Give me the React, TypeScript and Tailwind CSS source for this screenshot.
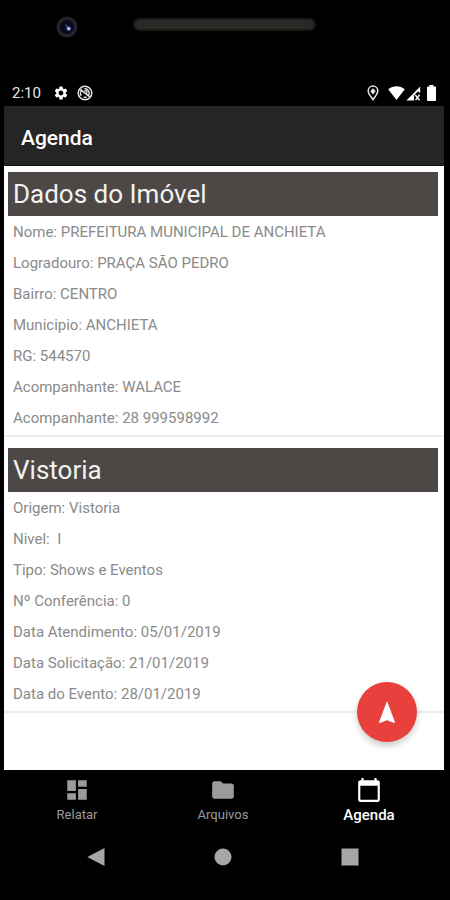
import { useState } from 'react';
import { MdCalendarToday, MdDashboard, MdFolder, MdSettings } from 'react-icons/md';
import type { IconType } from 'react-icons';

interface Field {
  label: string;
  value: string;
}

interface SectionProps {
  title: string;
  fields: Field[];
}

interface Tab {
  name: string;
  icon: IconType;
}

const PROPERTY_FIELDS: Field[] = [
  { label: 'Nome:', value: 'PREFEITURA MUNICIPAL DE ANCHIETA' },
  { label: 'Logradouro:', value: 'PRAÇA SÃO PEDRO' },
  { label: 'Bairro:', value: 'CENTRO' },
  { label: 'Municipio:', value: 'ANCHIETA' },
  { label: 'RG:', value: '544570' },
  { label: 'Acompanhante:', value: 'WALACE' },
  { label: 'Acompanhante:', value: '28 999598992' },
];

const INSPECTION_FIELDS: Field[] = [
  { label: 'Origem:', value: 'Vistoria' },
  { label: 'Nivel:', value: '\u00a0I' },
  { label: 'Tipo:', value: 'Shows e Eventos' },
  { label: 'Nº Conferência:', value: '0' },
  { label: 'Data Atendimento:', value: '05/01/2019' },
  { label: 'Data Solicitação:', value: '21/01/2019' },
  { label: 'Data do Evento:', value: '28/01/2019' },
];

const TABS: Tab[] = [
  { name: 'Relatar', icon: MdDashboard },
  { name: 'Arquivos', icon: MdFolder },
  { name: 'Agenda', icon: MdCalendarToday },
];

// Camera and speaker of the device
function PhoneTop() {
  return (
    <div className="flex h-20 items-start pt-4 pl-[52px]">
      <svg viewBox="0 0 22 22" className="size-[22px]">
        <circle cx="11" cy="11" r="10.5" fill="#24242a" />
        <circle cx="11" cy="11" r="7" fill="#090a1c" />
        <path d="M8.5 7.5l3 2 3.2 1.8-.6 3.2-3.4-.4-.4-3z" fill="#3c3f8f" />
        <circle cx="12.8" cy="12.7" r="1.7" fill="#b9bcfa" />
      </svg>
      <div className="mt-[2px] ml-[55px] h-[13px] w-[183px] rounded-full border-2 border-[#1b1a18] bg-[#2b2926]" />
    </div>
  );
}

function StatusBar() {
  return (
    <div className="flex h-[26px] items-center justify-between px-2 text-white">
      <div className="flex items-center">
        <span className="text-[15px] leading-none text-gray-200">2:10</span>
        <MdSettings className="ml-3 size-4" />
        <svg viewBox="0 0 16 16" className="ml-2 size-4" fill="none" stroke="#e5e5e5">
          <circle cx="8" cy="8" r="6.8" strokeWidth="1.5" />
          <path d="M4.4 10.8A4.3 4.3 0 0 1 5 4.9M7.4 3.8a4.3 4.3 0 0 1 4.3 6.2M9.6 12a4.3 4.3 0 0 1-3 .2" strokeWidth="1.4" />
          <path d="M3.4 4.4l9.4 7.4" strokeWidth="1.6" />
          <path d="M7.2 5.9h2.6v2.6" strokeWidth="1.3" />
        </svg>
      </div>
      <div className="flex items-center">
        <svg viewBox="0 0 12 16" className="h-4 w-3" fill="none" stroke="#e5e5e5">
          <path d="M6 14.6C4 11.6 1.2 8.6 1.2 5.9a4.8 4.8 0 0 1 9.6 0c0 2.7-2.8 5.7-4.8 8.7z" strokeWidth="1.5" />
          <path d="M6 3.2l2.7 3L6 9.4 3.3 6.2z" fill="#e5e5e5" stroke="none" />
        </svg>
        <svg viewBox="0 0 17 14" className="ml-[9px] h-[14px] w-[17px]" fill="#fff">
          <path d="M8.5 14L.2 3.2C5-.8 12-.8 16.8 3.2z" />
        </svg>
        <svg viewBox="0 0 15 15" className="ml-px size-[15px]" fill="#fff">
          <path d="M.4 14.6L14.2.6v6h-1.7V4.8L8 9.4v5.2z" />
          <path d="M9.3 9l4.2 5.2M13.6 8.6l-4 5.6" stroke="#fff" strokeWidth="1.4" />
        </svg>
        <svg viewBox="0 0 9 16" className="ml-[6px] h-4 w-[9px]" fill="#fff">
          <path d="M2.5 0h4v1.6H8.2q.8 0 .8.8v12.8q0 .8-.8.8H.8q-.8 0-.8-.8V2.4q0-.8.8-.8h1.7z" />
        </svg>
      </div>
    </div>
  );
}

function Section({ title, fields }: SectionProps) {
  return (
    <section className="border-b-2 border-[#ececec] pb-px">
      <h2 className="mr-[6px] ml-1 bg-[#4d4846] pl-[5px] text-[26px] leading-11 text-[#f2f2f2]">
        {title}
      </h2>
      <ul className="pt-px pl-[9px] text-[15px] leading-[31px] text-[#8a8a8a]">
        {fields.map((field, index) => (
          <li key={index}>
            {field.label} {field.value}
          </li>
        ))}
      </ul>
    </section>
  );
}

export default function App() {
  const [activeTab, setActiveTab] = useState('Agenda');

  return (
    <div className="flex min-h-screen flex-col bg-black pr-[6px] pl-1 font-[Roboto,sans-serif]">
      <PhoneTop />
      <StatusBar />

      <header className="flex h-[60px] items-center border-b border-[#111111] bg-[#252525] pt-1 pl-[17px]">
        <h1 className="text-[21px] leading-7 font-medium text-white">Agenda</h1>
      </header>

      <main className="relative flex grow flex-col gap-[11px] bg-white pt-[6px]">
        <Section title="Dados do Imóvel" fields={PROPERTY_FIELDS} />
        <Section title="Vistoria" fields={INSPECTION_FIELDS} />

        <button
          aria-label="Navegar"
          className="absolute right-[27px] bottom-7 flex size-[60px] items-center justify-center rounded-full bg-[#e8403c] shadow-[0_4px_6px_rgba(0,0,0,0.2)]"
        >
          <svg viewBox="0 0 16 22" className="h-[22px] w-4" fill="#fff">
            <path d="M8 0l8 21.2-.8.8L8 19.2.8 22l-.8-.8z" />
          </svg>
        </button>
      </main>

      {/* Bottom tabs */}
      <nav className="flex h-[60px] pt-[7px] pr-[2px]">
        {TABS.map(({ name, icon: Icon }) => {
          const active = name === activeTab;
          return (
            <button
              key={name}
              onClick={() => setActiveTab(name)}
              className={`flex flex-1 flex-col items-center ${active ? 'text-white' : 'text-[#9b9b9b]'}`}
            >
              <Icon className="size-[26px]" />
              <span className={active ? 'text-[15px] leading-6 font-medium' : 'text-[13px] leading-6'}>
                {name}
              </span>
            </button>
          );
        })}
      </nav>

      {/* Android navigation keys */}
      <div className="flex h-[70px] items-start justify-center gap-[109px] pt-[18px] pr-[2px]">
        <button aria-label="Voltar">
          <svg viewBox="0 0 18 18" className="size-[18px]" fill="#a6a6a6">
            <path d="M17.5 0v18L.3 9z" />
          </svg>
        </button>
        <button aria-label="Início">
          <svg viewBox="0 0 18 18" className="size-[18px]" fill="#a6a6a6">
            <circle cx="9" cy="9" r="8.5" />
          </svg>
        </button>
        <button aria-label="Recentes">
          <svg viewBox="0 0 18 18" className="size-[18px]" fill="#a6a6a6">
            <path d="M.5.5h17v17H.5z" />
          </svg>
        </button>
      </div>
    </div>
  );
}
